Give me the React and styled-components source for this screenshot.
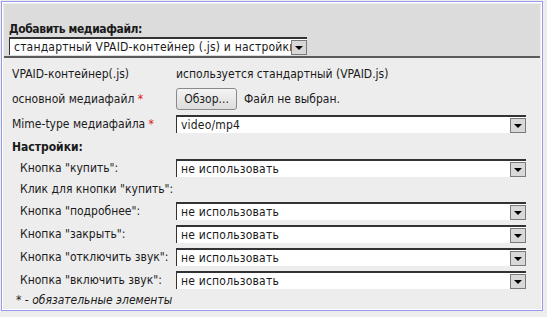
import React from 'react'
import styled, { createGlobalStyle } from 'styled-components'

const GlobalStyle = createGlobalStyle`
    html, body {
        margin: 0;
        padding: 0;
        background: #ededed;
    }
    body {
        font-family: "DejaVu Sans Condensed", "DejaVu Sans", sans-serif;
        font-size: 12px;
        color: #1a1a1a;
    }
`

const Panel = styled.div`
    margin: 1px 0 0 1px;
    width: 542px;
    height: 310px;
    border: 1px solid #9a9af2;
    box-sizing: border-box;
    background: #ededed;
    box-shadow: inset 0 0 0 1px #ffffff;
    padding: 2px 2px 0 2px;
    display: flex;
    flex-direction: column;
`

const Header = styled.div`
    background: #dcdcdc;
    height: 54px;
    border-bottom: 2px solid #5a5a5a;
    box-sizing: border-box;
    padding: 17px 0 0 5px;
`

const HeaderTitle = styled.div`
    font-weight: bold;
    height: 16px;
    line-height: 16px;
    letter-spacing: -0.4px;
`

const Body = styled.div`
    padding: 4px 0 0 8px;
    display: flex;
    flex-direction: column;
`

const Row = styled.div`
    display: flex;
    align-items: center;
    height: ${p => p.h || 23}px;
    padding-left: ${p => p.indent ? 8 : 0}px;
`

const Label = styled.div`
    width: ${p => p.indent ? 156 : 164}px;
    flex-shrink: 0;
    white-space: nowrap;
`

const Star = styled.span`
    color: #e01818;
`

const Section = styled.div`
    font-weight: bold;
    height: 20px;
    line-height: 18px;
    padding-top: 2px;
    box-sizing: border-box;
`

const SelectBox = styled.div`
    position: relative;
    width: ${p => p.w || 350}px;
    height: 18px;
    box-sizing: border-box;
    background: #fff;
    border-top: 2px solid #333;
    border-left: 1px solid #333;
    padding-left: 4px;
    line-height: 16px;
    white-space: nowrap;
    overflow: hidden;
    display: flex;
    align-items: center;
`

const SelectText = styled.span`
    flex: 1;
    overflow: hidden;
    letter-spacing: 0.2px;
`

const Arrow = styled.div`
    width: 16px;
    height: 15px;
    box-sizing: border-box;
    margin-top: 1px;
    border: 1px solid #7a7a7a;
    background: #d8d8d8;
    display: flex;
    align-items: center;
    justify-content: center;
    flex-shrink: 0;
`

const Triangle = styled.div`
    width: 0;
    height: 0;
    border-left: 4px solid transparent;
    border-right: 4px solid transparent;
    border-top: 4px solid #000;
    margin-top: 1px;
`

const BrowseButton = styled.div`
    width: 61px;
    height: 22px;
    box-sizing: border-box;
    border: 1px solid #8a8a8a;
    border-radius: 3px;
    background: linear-gradient(#f4f4f4, #dcdcdc);
    display: flex;
    align-items: center;
    justify-content: center;
    margin-right: 7px;
`

const Note = styled.div`
    font-style: italic;
    padding-left: 4px;
    height: 18px;
    line-height: 18px;
`

function Select({ value, w }) {
    return (
        <SelectBox w={w}>
            <SelectText>{value}</SelectText>
            <Arrow><Triangle /></Arrow>
        </SelectBox>
    )
}

const SETTINGS = [
    { label: 'Кнопка "купить":', select: true },
    { label: 'Клик для кнопки "купить":', select: false },
    { label: 'Кнопка "подробнее":', select: true },
    { label: 'Кнопка "закрыть":', select: true },
    { label: 'Кнопка "отключить звук":', select: true },
    { label: 'Кнопка "включить звук":', select: true },
]

export default function App() {
    return (
        <>
            <GlobalStyle />
            <Panel>
                <Header>
                    <HeaderTitle>Добавить медиафайл:</HeaderTitle>
                    <Select w={298} value="стандартный VPAID-контейнер (.js) и настройки" />
                </Header>
                <Body>
                    <Row h={24}>
                        <Label>VPAID-контейнер(.js)</Label>
                        <span>используется стандартный (VPAID.js)</span>
                    </Row>
                    <Row h={25}>
                        <Label>основной медиафайл <Star>*</Star></Label>
                        <BrowseButton>Обзор...</BrowseButton>
                        <span>Файл не выбран.</span>
                    </Row>
                    <Row h={25}>
                        <Label>Mime-type медиафайла <Star>*</Star></Label>
                        <Select value="video/mp4" />
                    </Row>
                    <Section>Настройки:</Section>
                    {SETTINGS.map((s, key) => (
                        <Row key={key} indent h={s.select ? 23 : 20}>
                            <Label indent>{s.label}</Label>
                            {s.select && <Select value="не использовать" />}
                        </Row>
                    ))}
                    <Note>* - обязательные элементы</Note>
                </Body>
            </Panel>
        </>
    )
}
